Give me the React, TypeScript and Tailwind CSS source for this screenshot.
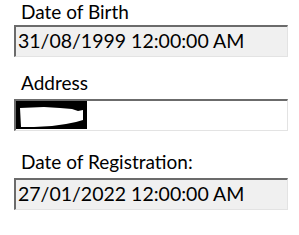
import React from 'react';

const boxBase =
  'h-[32px] w-[274px] border-t-2 border-l-2 border-r border-b border-t-[#6b6b6b] border-l-[#6b6b6b] border-r-[#e3e3e3] border-b-[#e3e3e3]';

function Label({ text, className }: { text: string; className: string }) {
  return <div className={`pl-[7px] text-[19px] leading-[23px] text-black ${className}`}>{text}</div>;
}

function ReadOnlyField({ value }: { value: string }) {
  return (
    <div className={`${boxBase} bg-[#f0f0f0] pl-[2px] text-[19.5px] leading-[28px] text-black`}>{value}</div>
  );
}

export default function App() {
  return (
    <div
      className="w-[299px] h-[235px] bg-white pl-[14px]"
      style={{ fontFamily: 'Lato, "Open Sans", sans-serif' }}
    >
      <Label text="Date of Birth" className="h-[25px] -mt-0" />
      <ReadOnlyField value="31/08/1999 12:00:00 AM" />

      <Label text="Address" className="mt-[14px] h-[28px]" />
      <div className={`${boxBase} h-[31px] bg-white flex items-start`}>
        {/* redacted value */}
        <div className="w-[71px] h-[28px] bg-black">
          <svg width="71" height="28" viewBox="0 0 71 28">
            <path
              d="M4 7 L28 6 L44 7 L56 8 L62 10 L67 9 L67 19 L60 21 L50 23 L36 25 L18 26 L5 26 Z"
              fill="#ffffff"
            />
          </svg>
        </div>
      </div>

      <Label text="Date of Registration:" className="mt-[19px] h-[28px]" />
      <ReadOnlyField value="27/01/2022 12:00:00 AM" />
    </div>
  );
}
